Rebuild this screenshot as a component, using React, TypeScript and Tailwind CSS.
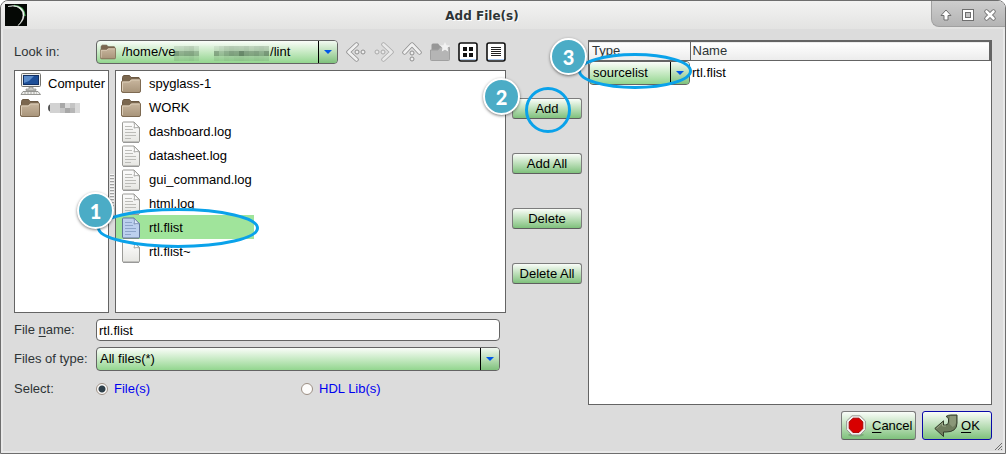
import { useState } from 'react';
import type { ReactNode } from 'react';

const FILES = [
  { name: 'spyglass-1', kind: 'folder' },
  { name: 'WORK', kind: 'folder' },
  { name: 'dashboard.log', kind: 'text' },
  { name: 'datasheet.log', kind: 'text' },
  { name: 'gui_command.log', kind: 'text' },
  { name: 'html.log', kind: 'text' },
  { name: 'rtl.flist', kind: 'text' },
  { name: 'rtl.flist~', kind: 'blank' },
];

// Pixel blocks over the hidden part of the path, one row per line
const PATH_BLOCKS = [
  [22, 24, 30, 34, 20, 2, 2, 2, 16, 24, 34, 38, 36, 34, 38, 30, 36, 38, 34],
  [76, 56, 64, 66, 50, 2, 2, 2, 66, 42, 60, 72, 68, 96, 72, 66, 72, 60, 80],
  [22, 18, 20, 24, 16, 2, 2, 2, 18, 14, 22, 20, 24, 26, 22, 20, 24, 22, 20],
];

function FolderIcon({ size }: { size: number }) {
  return (
    <svg width={size} height={size} viewBox="0 0 20 20" className="shrink-0">
      <path d="M1.5 17.5V3.5Q1.5 2 3 1.5H8.5L10 3.5H18L18.5 5V17.5Z" fill="#7b674f" stroke="#6b5842" />
      <path d="M.5 8Q.5 7 1.5 7H8L10 5H18.5Q19.5 5 19.5 6V17Q19.5 18.5 18 18.5H2Q.5 18.5 .5 17Z" fill="url(#folderFill)" stroke="#7d6a52" />
      <path d="M1.5 17V8H8.5L10.5 6H18.5" fill="none" stroke="#dccdb8" />
    </svg>
  );
}

function FileIcon({ kind, selected }: { kind: string; selected: boolean }) {
  return (
    <svg width="20" height="22" viewBox="0 0 20 22" className="shrink-0">
      <path d="M1.5 2Q1.5 1 2.5 1H13L18.5 6.5V20Q18.5 21 17.5 21H2.5Q1.5 21 1.5 20Z" fill={selected ? '#bcd0ee' : 'url(#paperFill)'} stroke={selected ? '#5f7597' : '#9a9a96'} />
      <path d="M2 21.5H18" stroke="#777" strokeOpacity=".6" />
      <path d="M13 1Q14 5 13 7Q16 6 18.5 7Z" fill={selected ? '#dfe9f9' : '#fff'} stroke={selected ? '#6d83a8' : '#969692'} strokeWidth=".8" />
      {kind === 'text' && (
        <path d="M4 5.5H11M4 8.5H12M4 11.5H15M4 14.5H15M4 17.5H10" stroke={selected ? '#8da5c9' : '#bcbcb8'} />
      )}
    </svg>
  );
}

function ComputerIcon() {
  return (
    <svg width="22" height="22" viewBox="0 0 22 22" className="shrink-0">
      <rect x="1.5" y=".5" width="19" height="13" rx="1" fill="#eeeeec" stroke="#73736f" />
      <rect x="3.5" y="2.5" width="15" height="9" fill="#1e4f98" stroke="#102f63" />
      <path d="M4 3H14L9 8L4 10Z" fill="#5b8ccb" />
      <path d="M9 14H13V16H16V17.5H6V16H9Z" fill="#c8c8c4" stroke="#7d7d79" strokeWidth=".6" />
      <path d="M3 18.5H18L20.5 21.5H1Z" fill="#eeeeec" stroke="#7d7d79" strokeWidth=".8" />
      <path d="M4 20H17" stroke="#a9a9a4" strokeDasharray="2 1" />
    </svg>
  );
}

function Arrow() {
  return (
    <span className="pointer-events-none absolute inset-y-0 right-0 flex w-[19px] items-center justify-center rounded-r-[3px] border-l border-black bg-linear-to-b from-[#f2f9f1] to-[#7fc17c]">
      <svg width="8" height="4" viewBox="0 0 8 4">
        <path d="M0 0H8L4 4Z" fill="#0057e8" />
      </svg>
    </span>
  );
}

function Combo({ id, label, value, icon, children }: { id: string; label?: string; value: string; icon?: ReactNode; children?: ReactNode }) {
  return (
    <div className="relative flex h-6 w-full items-center rounded border border-[#646464] bg-linear-to-b from-[#fafdf9] to-[#93d68f]">
      {icon && <span className="pl-[3px] pr-[3px]">{icon}</span>}
      <select id={id} aria-label={label} className="h-full min-w-0 flex-1 appearance-none bg-transparent pl-[3px] pr-5 outline-none">
        <option>{value}</option>
      </select>
      {children}
      <Arrow />
    </div>
  );
}

function Step({ n, className }: { n: number; className: string }) {
  return (
    <span className={`absolute z-20 flex size-[37px] items-center justify-center rounded-full border-2 border-white bg-[#4bacc6] font-[Lato,sans-serif] text-xl font-black text-white shadow-[0_1px_3px_rgba(0,0,0,0.5)] ${className}`}>
      {n}
    </span>
  );
}

function ToolButton({ label, children }: { label: string; children: ReactNode }) {
  return (
    <button aria-label={label} className="size-5">
      <svg width="20" height="20" viewBox="0 0 20 20" fill="none">
        {children}
      </svg>
    </button>
  );
}

function Chevron() {
  return (
    <>
      <path d="M10.5 2.5L2.5 10L10.5 17.5" stroke="#8f8f8f" strokeWidth="4.4" strokeLinecap="round" strokeLinejoin="round" />
      <path d="M10.5 2.5L2.5 10L10.5 17.5" stroke="#f0f0f0" strokeWidth="2.8" strokeLinecap="round" strokeLinejoin="round" />
      <circle cx="11" cy="10" r="2" fill="#eee" stroke="#8f8f8f" />
      <circle cx="17" cy="10" r="2" fill="#eee" stroke="#8f8f8f" />
    </>
  );
}

const pushButton = 'rounded-[3px] border border-[#7c7c7c] border-b-[#5e5e5e] bg-linear-to-b from-[#fafdf9] to-[#7fc17c] text-black';

export default function App() {
  const [selected, setSelected] = useState('rtl.flist');
  const [fileName, setFileName] = useState('rtl.flist');
  const [target, setTarget] = useState('files');

  const pick = (name: string) => {
    setSelected(name);
    setFileName(name);
  };

  return (
    <div className="flex min-h-screen flex-col overflow-hidden rounded-t-lg border border-[#6e6e6e] bg-[#dcdcdc] font-['Liberation_Sans',Arial,sans-serif] text-[13px] leading-4 text-black">
      {/* Shared gradients */}
      <svg className="absolute size-0">
        <defs>
          <linearGradient id="folderFill" x1="0" y1="0" x2="0" y2="1">
            <stop offset="0" stopColor="#c9b79f" />
            <stop offset="1" stopColor="#a8947a" />
          </linearGradient>
          <linearGradient id="paperFill" x1="0" y1="0" x2="0" y2="1">
            <stop offset="0" stopColor="#fdfdfd" />
            <stop offset="1" stopColor="#e6e6e2" />
          </linearGradient>
        </defs>
      </svg>

      {/* Title bar */}
      <header className="relative flex h-7 shrink-0 items-center justify-center bg-linear-to-b from-[#f3f3f2] to-[#e3e3e2]">
        <svg width="22" height="22" viewBox="0 0 22 22" className="absolute left-1 top-[3px]">
          <rect width="22" height="22" fill="#050805" />
          <path d="M9 1.5Q19 2 20 12" fill="none" stroke="#3fa04d" strokeWidth="1.6" />
          <path d="M3 2.5Q13 0 17.5 8Q19.5 15 13 21.5Q20.5 16 18.8 8Q15 -.5 3 2.5Z" fill="#fff" stroke="#e8ece8" strokeWidth=".6" />
        </svg>
        <h1 className="pr-[42px] pt-0.5 font-['DejaVu_Sans',sans-serif] text-xs font-bold text-[#2e3436] [text-shadow:1px_1px_0_#fff]">Add File(s)</h1>
        <div className="absolute right-0 top-0 flex h-[26px] w-[74px] items-center justify-end gap-2 rounded-bl-lg border-b border-l border-[#a0a0a0] bg-linear-to-b from-[#cecece] to-[#b4b4b4] pr-2 pt-0.5">
          <button aria-label="Shade">
            <svg width="14" height="14" viewBox="0 0 14 14">
              <path d="M7 2L12 7.5H9V12H5V7.5H2Z" fill="#fff" stroke="#6e6e6e" strokeLinejoin="round" />
            </svg>
          </button>
          <button aria-label="Maximize">
            <svg width="14" height="14" viewBox="0 0 14 14">
              <rect x="3.5" y="3.5" width="7" height="7" fill="#b8b8b8" stroke="#6e6e6e" strokeWidth="5" />
              <rect x="3.5" y="3.5" width="7" height="7" fill="#b8b8b8" stroke="#fff" strokeWidth="3" />
              <rect x="4.5" y="4.5" width="5" height="5" fill="#c4c4c4" stroke="#6e6e6e" />
            </svg>
          </button>
          <button aria-label="Close">
            <svg width="14" height="14" viewBox="0 0 14 14">
              <path d="M3.5 3.5L10.5 10.5M10.5 3.5L3.5 10.5" stroke="#6e6e6e" strokeWidth="4.4" strokeLinecap="round" />
              <path d="M3.5 3.5L10.5 10.5M10.5 3.5L3.5 10.5" stroke="#fff" strokeWidth="2.6" strokeLinecap="round" />
            </svg>
          </button>
        </div>
      </header>

      <main className="flex flex-1 flex-col border-x-2 border-b-2 border-[#e9e9e9] px-[11px] pb-[11px] pt-[11px]">
        <div className="flex flex-1 gap-1.5">
          {/* File browser */}
          <section className="flex flex-[492] flex-col gap-1.5 pb-[5px] text-[#2e3436]">
            <div className="flex items-center">
              <label htmlFor="lookin" className="w-[82px] shrink-0">Look in:</label>
              <div className="flex flex-1 items-center gap-2 text-black">
                <Combo id="lookin" value={'/home/ve\u2003\u2003\u2003\u2003\u2003\u2003\u2003\u00a0/lint'} icon={<FolderIcon size={16} />}>
                  <svg width="96" height="22" viewBox="0 0 96 22" className="pointer-events-none absolute left-[77px] top-0">
                    {PATH_BLOCKS.map((row, y) =>
                      row.map((level, x) => (
                        <rect key={`${x}-${y}`} x={x * 5} y={5 + y * 5} width="5" height="5" fill="#26402a" fillOpacity={level / 170} />
                      ))
                    )}
                  </svg>
                </Combo>
                <div className="flex shrink-0 gap-2">
                  <ToolButton label="Back"><Chevron /></ToolButton>
                  <ToolButton label="Forward">
                    <g transform="matrix(-1 0 0 1 20 0)" opacity=".65"><Chevron /></g>
                  </ToolButton>
                  <ToolButton label="Parent directory">
                    <g transform="rotate(90 10 10)"><Chevron /></g>
                  </ToolButton>
                  <ToolButton label="Create new folder">
                    <path d="M1.5 17V3Q1.5 1.5 3 1.5H8L10 4H18V17Z" fill="#979797" />
                    <path d="M.5 8H8L10 5.5H19.5V17.5Q19.5 18.5 18.5 18.5H1.5Q.5 18.5 .5 17.5Z" fill="#b5b5b5" stroke="#a0a0a0" />
                    <path d="M15 0L16.6 3.2L20 3.6L17.6 6L18.2 9.4L15 7.8L11.8 9.4L12.4 6L10 3.6L13.4 3.2Z" fill="#f2f2f2" />
                  </ToolButton>
                  <ToolButton label="List view">
                    <rect x="1" y="1" width="18" height="18" rx="2" fill="#fff" stroke="#111" strokeWidth="1.6" />
                    <path d="M2 17.5H18" stroke="#a9c9f0" />
                    <path d="M5 5H9V9H5ZM11 5H15V9H11ZM5 11H9V15H5ZM11 11H15V15H11Z" fill="#111" />
                  </ToolButton>
                  <ToolButton label="Detail view">
                    <rect x="1" y="1" width="18" height="18" rx="2" fill="#fff" stroke="#111" strokeWidth="1.6" />
                    <path d="M2 17.5H18" stroke="#a9c9f0" />
                    <path d="M5 5.5H15M5 7.5H15M5 9.5H15M5 11.5H15M5 13.5H15" stroke="#222" />
                  </ToolButton>
                </div>
              </div>
            </div>

            <div className="relative flex min-h-[243px] flex-1 text-black">
              <ul className="w-[95px] shrink-0 border border-[#646464] bg-white pl-[5px]">
                <li className="flex h-6 items-center gap-1.5 pt-0.5">
                  <ComputerIcon />
                  Computer
                </li>
                <li className="flex h-6 items-center gap-2 pt-0.5">
                  <FolderIcon size={20} />
                  <svg width="32" height="10" viewBox="0 0 32 10" role="img" aria-label="Hidden user folder">
                    <path d="M4 1Q0 1 0 5T4 9" fill="#555" />
                    <path d="M2 0H12V10H2Z" fill="#d2d2d2" />
                    <path d="M12 0H17V5H12ZM17 5H22V10H17Z" fill="#a8a8a8" />
                    <path d="M12 5H17V10H12ZM22 0H27V5H22Z" fill="#c4c4c4" />
                    <path d="M17 0H22V5H17ZM27 0H32V10H27Z" fill="#dadada" />
                    <path d="M22 5H27V10H22Z" fill="#b6b6b6" />
                  </svg>
                </li>
              </ul>
              {/* Splitter grip */}
              <div className="flex w-1.5 shrink-0 items-center justify-center">
                <div className="h-9 w-1 bg-[repeating-linear-gradient(#f6f6f6_0_1px,#a0a0a0_1px_2px,#dcdcdc_2px_3px)]" />
              </div>
              <ul className="flex-1 border border-[#646464] bg-white">
                {FILES.map((file) => (
                  <li key={file.name}>
                    <button
                      onClick={() => pick(file.name)}
                      className={`flex h-6 w-[138px] items-center gap-2 whitespace-nowrap pl-[5px] pt-0.5 text-left ${
                        selected === file.name ? 'bg-[#a0e49b]' : ''
                      }`}
                    >
                      {file.kind === 'folder' ? <FolderIcon size={20} /> : <FileIcon kind={file.kind} selected={selected === file.name} />}
                      {file.name}
                    </button>
                  </li>
                ))}
              </ul>
              <svg width="164" height="42" viewBox="0 0 164 42" className="pointer-events-none absolute left-[82px] top-[137px] z-10">
                <ellipse cx="82" cy="21" rx="79.5" ry="18.5" fill="none" stroke="#0aa2ea" strokeWidth="3" />
              </svg>
              <Step n={1} className="left-[63px] top-[122px]" />
            </div>

            <div className="flex items-center pr-1.5">
              <label htmlFor="filename" className="w-[82px] shrink-0">
                File <u className="underline-offset-2">n</u>ame:
              </label>
              <input
                id="filename"
                type="text"
                value={fileName}
                onChange={(e) => setFileName(e.target.value)}
                className="h-[22px] min-w-0 flex-1 rounded border border-[#646464] bg-white px-0.5 text-black outline-none"
              />
            </div>
            <div className="flex items-center pr-1.5">
              <label htmlFor="filetype" className="w-[82px] shrink-0 whitespace-nowrap">Files of type:</label>
              <div className="flex-1 text-black">
                <Combo id="filetype" value="All files(*)" />
              </div>
            </div>
            <div className="flex h-[23px] items-center">
              <span className="w-[82px] shrink-0">Select:</span>
              {[
                { id: 'files', label: 'File(s)' },
                { id: 'libs', label: 'HDL Lib(s)' },
              ].map((option) => (
                <label key={option.id} className="flex flex-1 items-center gap-1.5 text-[#0000f0]">
                  <input
                    type="radio"
                    name="target"
                    checked={target === option.id}
                    onChange={() => setTarget(option.id)}
                    className="size-3 appearance-none rounded-full border border-[#9c8f84] bg-[#fdfcfb] checked:bg-[radial-gradient(circle,#2e3f4a_0_3px,#fdfcfb_4px)]"
                  />
                  {option.label}
                </label>
              ))}
            </div>
          </section>

          {/* Transfer buttons */}
          <section className="relative flex w-[70px] shrink-0 flex-col gap-[34px] pt-[58px]">
            {['Add', 'Add All', 'Delete', 'Delete All'].map((label) => (
              <button key={label} className={`h-[21px] whitespace-nowrap ${pushButton}`}>
                {label}
              </button>
            ))}
            <svg width="48" height="48" viewBox="0 0 48 48" className="pointer-events-none absolute left-3 top-[46px]">
              <circle cx="24" cy="24" r="21.5" fill="none" stroke="#0aa2ea" strokeWidth="3" />
            </svg>
            <Step n={2} className="-left-[29px] top-[38px]" />
          </section>

          {/* Chosen files */}
          <section className="relative flex-[402] border border-[#646464] bg-white">
            <table className="w-full table-fixed border-collapse text-left">
              <thead>
                <tr className="h-[19px] border-b border-r-2 border-t border-[#646464] bg-linear-to-b from-white to-[#ececec] text-[#2e3436]">
                  <th className="w-[101px] border-r border-[#646464] p-0 pl-[3px] font-normal">Type</th>
                  <th className="p-0 pl-0.5 font-normal">Name</th>
                </tr>
              </thead>
              <tbody>
                <tr>
                  <td className="p-0">
                    <Combo id="type" label="Type" value="sourcelist" />
                  </td>
                  <td className="p-0 pl-0.5">rtl.flist</td>
                </tr>
              </tbody>
            </table>
            <svg width="116" height="40" viewBox="0 0 116 40" className="pointer-events-none absolute -left-3 top-[10px]">
              <ellipse cx="58" cy="20" rx="55.5" ry="16.5" fill="none" stroke="#0aa2ea" strokeWidth="3" />
            </svg>
            <Step n={3} className="-left-[39px] -top-[3px]" />
          </section>
        </div>

        <footer className="relative mt-1.5 flex h-[29px] justify-end gap-1.5">
          <button className={`flex w-[75px] items-center gap-1.5 pl-1 ${pushButton}`}>
            <svg width="20" height="22" viewBox="0 0 20 22" className="shrink-0">
              <ellipse cx="10" cy="20" rx="8" ry="1.6" fill="#000" fillOpacity=".15" />
              <path d="M6 .8H14L19.4 6V14.6L14 20H6L.6 14.6V6Z" fill="#f2f2f0" stroke="#9a9a96" />
              <path d="M7 3.2H13L16.8 7V13.6L13 17.4H7L3.2 13.6V7Z" fill="#d80000" stroke="#a80000" />
            </svg>
            <span><u className="underline-offset-2">C</u>ancel</span>
          </button>
          <button className="flex w-[70px] items-center gap-[3px] rounded-[3px] border border-[#0a0aa8] bg-linear-to-b from-[#fafdf9] to-[#7fc17c] pl-[11px]">
            <svg width="24" height="24" viewBox="0 0 24 24" className="shrink-0">
              <path d="M12 2.5Q14 1 17 1H23V9Q23 18 12 18H9.5V22.5L.8 14.5L9.5 6.8V11H11.5Q14.5 11 14.5 8V5Q14 3 12 2.5Z" fill="#6f7d5e" stroke="#333d2b" />
              <path d="M16 2H22V9Q21 12 18.5 13L15.5 10V5Z" fill="#8b9879" />
              <path d="M2.5 14.5L8.5 9V12H12" fill="none" stroke="#a4b092" strokeWidth=".8" />
            </svg>
            <span><u className="underline-offset-2">O</u>K</span>
          </button>
          <svg width="7" height="7" viewBox="0 0 7 7" className="absolute -bottom-2.5 -right-2.5">
            <path d="M0 7L7 0M3 7L7 3M6 7L7 6" stroke="#6e6e6e" />
          </svg>
        </footer>
      </main>
    </div>
  );
}
